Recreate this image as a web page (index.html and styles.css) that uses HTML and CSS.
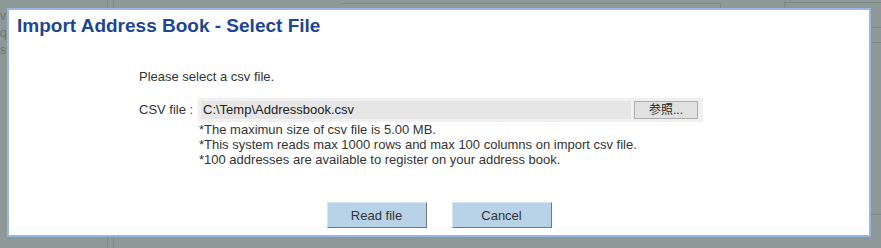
FILE: index.html
```html
<!DOCTYPE html>
<html lang="en">
<head>
    <meta charset="UTF-8">
    <meta name="viewport" content="width=device-width, initial-scale=1.0">
    <title>Import Address Book</title>
    <link rel="stylesheet" href="styles.css">
</head>
<body>
    <!-- dimmed page behind the dialog -->
    <div class="backdrop">
        <div class="bg-text">v<br>q<br>s</div>
        <div class="bg-line bg-v1"></div>
        <div class="bg-line bg-v2"></div>
        <div class="bg-line bg-h1"></div>
        <div class="bg-line bg-v3"></div>
        <div class="bg-line bg-h2"></div>
        <div class="bg-line bg-v4"></div>
        <div class="bg-line bg-h3"></div>
        <div class="bg-line bg-h4"></div>
        <div class="bg-line bg-h5"></div>
    </div>

    <div class="dialog">
        <h1 class="dialog-title">Import Address Book - Select File</h1>

        <div class="dialog-body">
            <p class="lead">Please select a csv file.</p>

            <div class="file-row">
                <label class="file-label">CSV file :</label>
                <div class="file-input">
                    <span class="file-path">C:\Temp\Addressbook.csv</span>
                    <span class="browse-btn">参照...</span>
                </div>
            </div>

            <ul class="notes">
                <li>*The maximun size of csv file is 5.00 MB.</li>
                <li>*This system reads max 1000 rows and max 100 columns on import csv file.</li>
                <li>*100 addresses are available to register on your address book.</li>
            </ul>
        </div>

        <div class="actions">
            <button class="btn">Read file</button>
            <button class="btn">Cancel</button>
        </div>
    </div>
</body>
</html>
```

FILE: styles.css
```css
:root {
    --overlay: #8f9898;
    --overlay-line: #7f8888;
    --dialog-border: #98b8e4;
    --title-color: #1d4691;
    --text-color: #333333;
    --btn-bg: #b8d3e8;
}

* {
    box-sizing: border-box;
    margin: 0;
    padding: 0;
}

body {
    font-family: "Liberation Sans", Arial, sans-serif;
    font-size: 13px;
    color: var(--text-color);
    background-color: var(--overlay);
    width: 881px;
    height: 248px;
    overflow: hidden;
    position: relative;
}

/* backdrop */
.backdrop {
    position: absolute;
    inset: 0;
}

.bg-text {
    position: absolute;
    left: 0;
    top: 8px;
    font-size: 12px;
    line-height: 17px;
    color: #6b7373;
}

.bg-line {
    position: absolute;
    background: var(--overlay-line);
}

.bg-v1 { left: 107px; top: 0; width: 1px; height: 248px; }
.bg-v2 { left: 113px; top: 0; width: 1px; height: 248px; }
.bg-h1 { left: 340px; top: 3px; width: 380px; height: 1px; }
.bg-v3 { left: 720px; top: 3px; width: 1px; height: 10px; }
.bg-h2 { left: 784px; top: 2px; width: 97px; height: 1px; }
.bg-v4 { left: 784px; top: 2px; width: 1px; height: 10px; }
.bg-h3 { left: 871px; top: 27px; width: 10px; height: 1px; }
.bg-h4 { left: 871px; top: 42px; width: 10px; height: 1px; }
.bg-h5 { left: 871px; top: 214px; width: 10px; height: 1px; }

/* dialog */
.dialog {
    position: absolute;
    top: 8px;
    left: 7px;
    width: 864px;
    height: 229px;
    background: #ffffff;
    border: 2px solid var(--dialog-border);
    display: flex;
    flex-direction: column;
}

.dialog-title {
    font-size: 19px;
    line-height: 22px;
    font-weight: bold;
    color: var(--title-color);
    padding: 5px 8px 0;
}

.dialog-body {
    margin-top: 32px;
    padding-left: 130px;
}

.lead {
    line-height: 16px;
}

.file-row {
    display: flex;
    align-items: center;
    margin-top: 13px;
    height: 24px;
}

.file-label {
    width: 59px;
    line-height: 16px;
}

.file-input {
    width: 505px;
    height: 24px;
    background: #f0f0f0;
    display: flex;
    align-items: center;
    padding: 2px 5px 2px 2px;
    gap: 2px;
}

.file-path {
    flex-grow: 1;
    height: 20px;
    line-height: 18px;
    background: #e6e6e6;
    border: 1px solid #f3f3f3;
    padding-left: 2px;
    color: #222222;
}

.browse-btn {
    width: 64px;
    height: 18px;
    line-height: 16px;
    text-align: center;
    background: #e1e1e1;
    border: 1px solid #adadad;
    font-family: "Liberation Sans", "Noto Sans CJK JP", sans-serif;
    font-size: 12px;
    color: #222222;
}

.notes {
    list-style: none;
    padding-left: 60px;
    line-height: 15px;
}

.actions {
    display: flex;
    justify-content: center;
    gap: 25px;
    margin-top: 35px;
}

.btn {
    width: 100px;
    height: 26px;
    background: var(--btn-bg);
    color: var(--text-color);
    font-family: "Liberation Sans", Arial, sans-serif;
    font-size: 13px;
    border: 1px solid;
    border-color: #d6e4f0 #6f7a82 #6f7a82 #d6e4f0;
    cursor: pointer;
}
```
